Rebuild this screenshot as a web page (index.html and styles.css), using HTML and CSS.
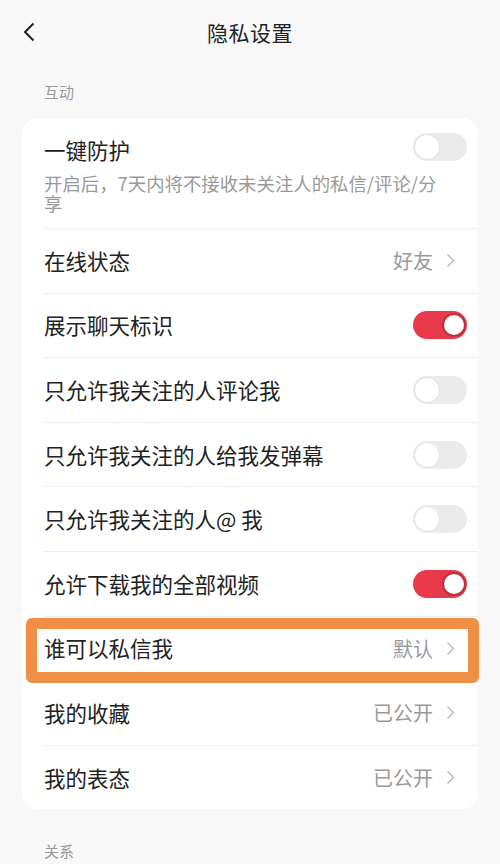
FILE: index.html
```html
<!DOCTYPE html>
<html lang="zh-CN">
<head>
    <meta charset="UTF-8">
    <meta name="viewport" content="width=device-width, initial-scale=1.0">
    <title>隐私设置</title>
    <link rel="stylesheet" href="styles.css">
</head>
<body>
    <div class="header">
        <svg class="back" width="12" height="20" viewBox="0 0 12 20">
            <polyline points="10.5,1.5 2,10 10.5,18.5" fill="none" stroke="#222" stroke-width="2"/>
        </svg>
        <h1 class="title">隐私设置</h1>
    </div>

    <div class="section">互动</div>

    <div class="card">
        <div class="row first">
            <div class="line">
                <div class="name">一键防护</div>
                <span class="toggle"></span>
            </div>
            <div class="desc">开启后，7天内将不接收未关注人的私信/评论/分享</div>
        </div>
        <div class="row">
            <div class="name">在线状态</div>
            <div class="value">好友<svg class="chev" width="9" height="15" viewBox="0 0 9 15"><polyline points="1.5,1.5 7.5,7.5 1.5,13.5" fill="none" stroke="#bbb" stroke-width="1.5"/></svg></div>
        </div>
        <div class="row">
            <div class="name">展示聊天标识</div>
            <span class="toggle on"></span>
        </div>
        <div class="row">
            <div class="name">只允许我关注的人评论我</div>
            <span class="toggle"></span>
        </div>
        <div class="row">
            <div class="name">只允许我关注的人给我发弹幕</div>
            <span class="toggle"></span>
        </div>
        <div class="row">
            <div class="name">只允许我关注的人@ 我</div>
            <span class="toggle"></span>
        </div>
        <div class="row">
            <div class="name">允许下载我的全部视频</div>
            <span class="toggle on"></span>
        </div>
        <div class="row marked">
            <div class="name">谁可以私信我</div>
            <div class="value">默认<svg class="chev" width="9" height="15" viewBox="0 0 9 15"><polyline points="1.5,1.5 7.5,7.5 1.5,13.5" fill="none" stroke="#bbb" stroke-width="1.5"/></svg></div>
        </div>
        <div class="row">
            <div class="name">我的收藏</div>
            <div class="value">已公开<svg class="chev" width="9" height="15" viewBox="0 0 9 15"><polyline points="1.5,1.5 7.5,7.5 1.5,13.5" fill="none" stroke="#bbb" stroke-width="1.5"/></svg></div>
        </div>
        <div class="row last">
            <div class="name">我的表态</div>
            <div class="value">已公开<svg class="chev" width="9" height="15" viewBox="0 0 9 15"><polyline points="1.5,1.5 7.5,7.5 1.5,13.5" fill="none" stroke="#bbb" stroke-width="1.5"/></svg></div>
        </div>
    </div>

    <div class="section bottom">关系</div>
</body>
</html>
```

FILE: styles.css
```css
body {
    margin: 0;
    background: #f8f8f8;
    font-family: "Noto Sans CJK SC", "Noto Sans", sans-serif;
    color: #222;
}

.header {
    position: relative;
    height: 64px;
    display: flex;
    align-items: center;
    justify-content: center;
}

.back {
    position: absolute;
    left: 23px;
    top: 22px;
}

.title {
    margin: 0;
    font-size: 21px;
    font-weight: normal;
    letter-spacing: 0.5px;
}

.section {
    padding: 16px 0 0 44px;
    height: 54px;
    box-sizing: border-box;
    font-size: 15px;
    line-height: 24px;
    color: #999;
}

.section.bottom {
    padding-top: 30px;
}

.card {
    margin: 0 22px;
    background: #fff;
    border-radius: 16px;
}

.row {
    margin-left: 22px;
    padding-right: 11px;
    min-height: 63.6px;
    border-bottom: 1px solid #eeeeee;
    display: flex;
    align-items: center;
    justify-content: space-between;
    position: relative;
}

.row.first {
    display: block;
    padding-top: 17px;
    padding-bottom: 15px;
    min-height: 0;
}

.line {
    display: flex;
    align-items: center;
    justify-content: space-between;
}

.line .toggle {
    margin-top: -6px;
}

.row.last {
    border-bottom: none;
}

.name {
    font-size: 21.5px;
    line-height: 30px;
}

.desc {
    margin-top: 8px;
    width: 405px;
    font-size: 18.4px;
    line-height: 20px;
    color: #999;
}

.value {
    display: flex;
    align-items: center;
    font-size: 20px;
    color: #999;
    padding-right: 12px;
}

.chev {
    margin-left: 13px;
}

.toggle {
    width: 54px;
    height: 28px;
    border-radius: 14px;
    background: #ebebeb;
    position: relative;
    flex-shrink: 0;
}

.toggle::after {
    content: "";
    position: absolute;
    left: 1px;
    top: 1px;
    width: 24px;
    height: 24px;
    border-radius: 50%;
    background: #fff;
    border: 1px solid #e2e2e2;
}

.toggle.on {
    background: #e83a4a;
}

.toggle.on::after {
    left: auto;
    right: 1px;
    top: 2px;
    width: 20px;
    height: 20px;
    border: 2px solid #b8323d;
}

.marked::before {
    content: "";
    position: absolute;
    left: -18px;
    right: -1px;
    top: 1px;
    bottom: -3px;
    border: 11px solid #ee8f45;
    border-radius: 6px;
    pointer-events: none;
}
```
